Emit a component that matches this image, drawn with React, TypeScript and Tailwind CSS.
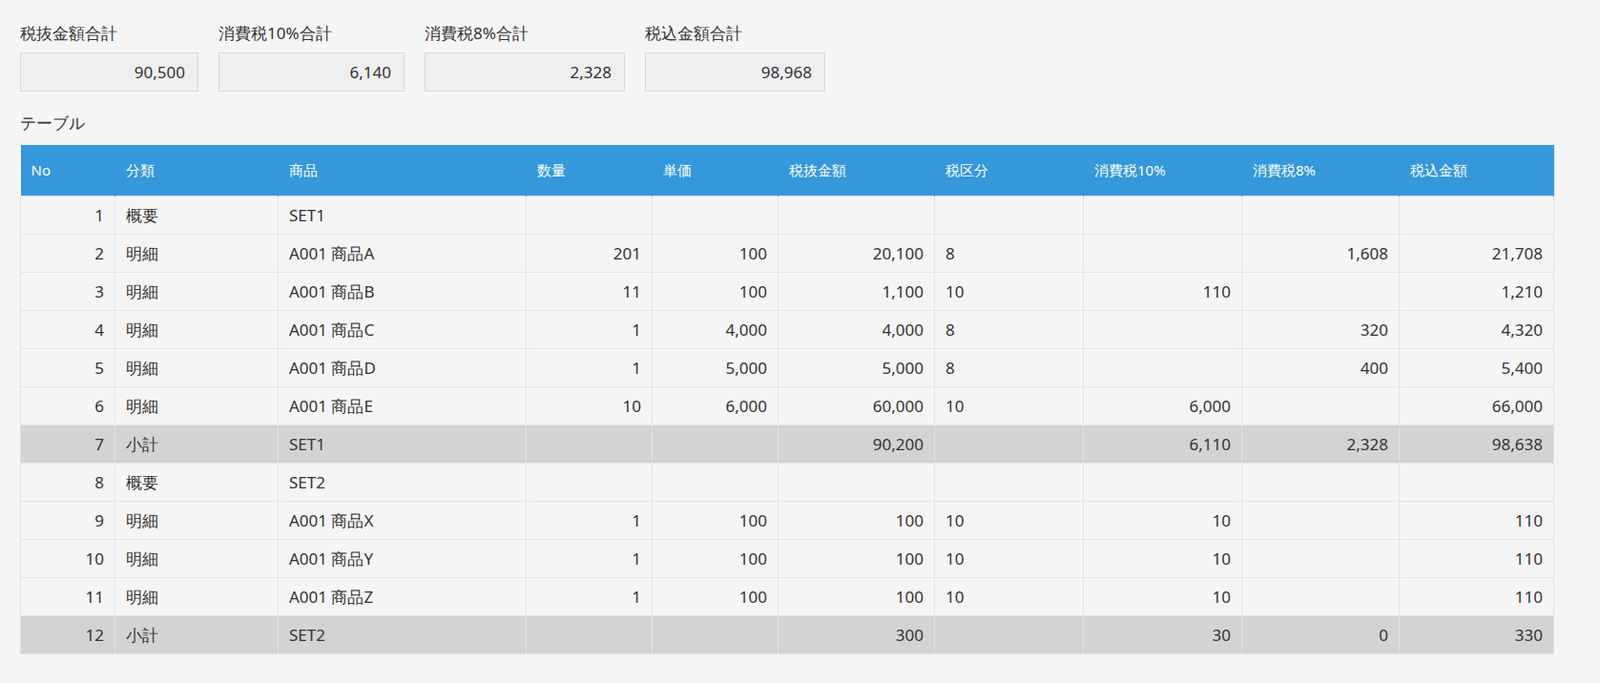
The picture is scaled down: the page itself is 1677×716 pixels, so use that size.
const totals = [
  { label: "税抜金額合計", value: "90,500", w: "w-[187px]" },
  { label: "消費税10%合計", value: "6,140", w: "w-[195px]" },
  { label: "消費税8%合計", value: "2,328", w: "w-[210px]" },
  { label: "税込金額合計", value: "98,968", w: "w-[189px]" },
];

const cols = [
  { h: "No", w: "w-[99px]", r: true },
  { h: "分類", w: "w-[171px]", r: false },
  { h: "商品", w: "w-[260px]", r: false },
  { h: "数量", w: "w-[132px]", r: true },
  { h: "単価", w: "w-[132px]", r: true },
  { h: "税抜金額", w: "w-[164px]", r: true },
  { h: "税区分", w: "w-[156px]", r: false },
  { h: "消費税10%", w: "w-[166px]", r: true },
  { h: "消費税8%", w: "w-[165px]", r: true },
  { h: "税込金額", w: "w-[162px]", r: true },
];

const rows: string[][] = [
  ["1", "概要", "SET1", "", "", "", "", "", "", ""],
  ["2", "明細", "A001 商品A", "201", "100", "20,100", "8", "", "1,608", "21,708"],
  ["3", "明細", "A001 商品B", "11", "100", "1,100", "10", "110", "", "1,210"],
  ["4", "明細", "A001 商品C", "1", "4,000", "4,000", "8", "", "320", "4,320"],
  ["5", "明細", "A001 商品D", "1", "5,000", "5,000", "8", "", "400", "5,400"],
  ["6", "明細", "A001 商品E", "10", "6,000", "60,000", "10", "6,000", "", "66,000"],
  ["7", "小計", "SET1", "", "", "90,200", "", "6,110", "2,328", "98,638"],
  ["8", "概要", "SET2", "", "", "", "", "", "", ""],
  ["9", "明細", "A001 商品X", "1", "100", "100", "10", "10", "", "110"],
  ["10", "明細", "A001 商品Y", "1", "100", "100", "10", "10", "", "110"],
  ["11", "明細", "A001 商品Z", "1", "100", "100", "10", "10", "", "110"],
  ["12", "小計", "SET2", "", "", "300", "", "30", "0", "330"],
];

export default function App() {
  return (
    <div className="min-h-[716px] bg-[#f5f5f5] px-[21px] pt-[22px] text-[#333] text-[17px] font-['Meiryo','Noto_Sans_CJK_JP',sans-serif]">
      <div className="flex gap-[21px]">
        {totals.map((t) => (
          <div key={t.label} className={t.w}>
            <div className="h-[26px] leading-[26px] mb-[7px]">{t.label}</div>
            <div className="h-[41px] border border-[#d8d8d8] bg-[#efefef] text-right pr-[13px] leading-[39px]">
              {t.value}
            </div>
          </div>
        ))}
      </div>
      <div className="mt-[20px] h-[26px] leading-[26px] mb-[10px]">テーブル</div>
      <table className="border-collapse table-fixed w-[1607px]">
        <thead>
          <tr className="bg-[#3498db] text-white text-[15px] h-[53px]">
            {cols.map((c) => (
              <th key={c.h} className={`${c.w} text-left font-normal px-[11px] border-r border-[#3498db]`}>
                {c.h}
              </th>
            ))}
          </tr>
        </thead>
        <tbody>
          {rows.map((r) => {
            const sub = r[1] === "小計";
            return (
              <tr key={r[0]} className={`h-[40px] ${sub ? "bg-[#d3d3d3]" : ""}`}>
                {r.map((v, i) => (
                  <td
                    key={i}
                    className={`border border-[#e3e3e3] px-[11px] leading-none ${cols[i].r ? "text-right" : "text-left"}`}
                  >
                    {v}
                  </td>
                ))}
              </tr>
            );
          })}
        </tbody>
      </table>
    </div>
  );
}
